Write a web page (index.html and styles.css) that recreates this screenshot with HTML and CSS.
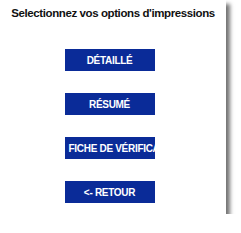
FILE: index.html
```html
<!DOCTYPE html>
<html lang="fr">
<head>
    <meta charset="UTF-8">
    <title>Options d'impressions</title>
    <link rel="stylesheet" href="styles.css">
</head>
<body>
    <div class="panel">
        <h1>Selectionnez vos options d'impressions</h1>

        <!-- Print options -->
        <div class="options">
            <button class="option-button">DÉTAILLÉ</button>
            <button class="option-button">RÉSUMÉ</button>
            <button class="option-button">FICHE DE VÉRIFICATION</button>
            <button class="option-button">&lt;- RETOUR</button>
        </div>
    </div>
</body>
</html>
```

FILE: styles.css
```css
/* General Styles */
body {
    margin: 0;
    font-family: "Liberation Sans", Arial, sans-serif;
    background-color: #fff;
}

.panel {
    width: 226px;
    height: 214px;
    background-color: #fff;
    box-shadow: 4px 4px 4px rgba(0, 0, 0, 0.55);
}

h1 {
    margin: 0;
    padding-top: 6px;
    font-size: 11.5px;
    line-height: 14px;
    font-weight: bold;
    letter-spacing: -0.4px;
    color: #111;
    text-align: center;
    white-space: nowrap;
}

.options {
    display: flex;
    flex-direction: column;
    align-items: center;
    gap: 22px;
    margin-top: 29px;
    padding-right: 7px;
}

.option-button {
    width: 90px;
    height: 22px;
    padding: 0 4px;
    border: none;
    background-color: #0a2b98;
    color: #fff;
    font-family: "Liberation Sans", Arial, sans-serif;
    font-size: 10px;
    font-weight: bold;
    letter-spacing: -0.3px;
    white-space: nowrap;
    overflow: hidden;
    text-align: center;
    cursor: pointer;
}
```
